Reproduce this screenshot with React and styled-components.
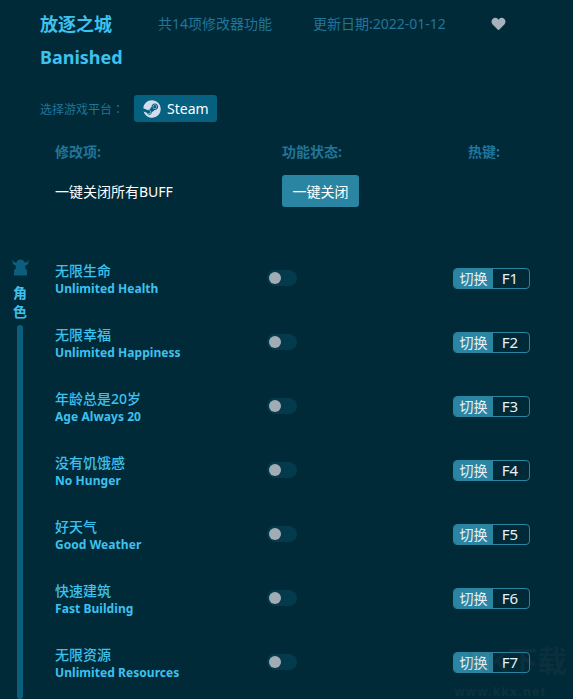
import React from 'react';
import styled, { createGlobalStyle } from 'styled-components';
import { FaSteam, FaHeart } from 'react-icons/fa';

const GlobalStyle = createGlobalStyle`
  html, body {
    margin: 0;
    height: 699px;
    overflow: hidden;
    background: #012a38;
  }
  * { box-sizing: border-box; }
`;

const Page = styled.div`
  position: relative;
  width: 573px;
  height: 699px;
  overflow: hidden;
  background: #012a38;
  font-family: "Noto Sans", "Noto Sans CJK SC", sans-serif;
  color: #fff;
`;

const Head = styled.header`
  padding: 10px 0 0 40px;
`;

const TopRow = styled.div`
  display: flex;
  align-items: center;
  height: 28px;
`;

const Title = styled.h1`
  margin: 0;
  width: 118px;
  font-size: 18px;
  line-height: 28px;
  font-weight: 700;
  color: #3dc1ee;
`;

const Meta = styled.span`
  width: ${props => props.w}px;
  font-size: 14px;
  line-height: 28px;
  color: #20759a;
  white-space: nowrap;
`;

const Heart = styled(FaHeart)`
  width: 15px;
  height: 14px;
  color: #a7b2bc;
`;

const SubTitle = styled.h2`
  margin: 5px 0 0;
  font-size: 18px;
  line-height: 28px;
  font-weight: 700;
  color: #3dc1ee;
`;

const PlatformRow = styled.div`
  display: flex;
  align-items: center;
  margin-top: 24px;
  height: 27px;
`;

const PlatformLabel = styled.span`
  width: 94px;
  font-size: 12px;
  color: #20759a;
  white-space: nowrap;
`;

const Colon = styled.span`
  font-family: "Noto Sans CJK TC", sans-serif;
`;

const SteamButton = styled.button`
  display: flex;
  align-items: center;
  gap: 6px;
  width: 83px;
  height: 27px;
  padding: 0 0 0 9px;
  border: 0;
  border-radius: 3px;
  background: #05617f;
  color: #fff;
  font: inherit;
  font-size: 14px;
`;

const SteamIcon = styled(FaSteam)`
  width: 18px;
  height: 18px;
  color: #d3dcea;
`;

const Columns = styled.div`
  display: grid;
  grid-template-columns: 227px 186px 1fr;
  padding-left: 55px;
  align-items: center;
`;

const ColumnHead = styled(Columns)`
  margin-top: 18px;
  height: 22px;
`;

const HeadCell = styled.span`
  font-size: 14px;
  font-weight: 700;
  color: #20759a;
`;

const CloseAll = styled(Columns)`
  margin-top: 13px;
  height: 32px;
`;

const CloseLabel = styled.span`
  font-size: 14px;
  color: #fff;
`;

const CloseButton = styled.button`
  width: 77px;
  height: 32px;
  padding: 0;
  border: 0;
  border-radius: 3px;
  background: #2a85a3;
  color: #fff;
  font: inherit;
  font-size: 14px;
`;

const Body = styled.div`
  display: grid;
  grid-template-columns: 55px 1fr;
  margin-top: 39px;
`;

const Side = styled.aside`
  display: flex;
  flex-direction: column;
  align-items: center;
  width: 40px;
  height: 453px;
  padding-top: 13px;
`;

const SideLabel = styled.span`
  margin-top: ${props => props.top}px;
  font-size: 14px;
  line-height: 19px;
  font-weight: 700;
  color: #3dc1ee;
`;

const SideBar = styled.div`
  width: 6px;
  flex: 1;
  margin-top: 4px;
  border-radius: 3px;
  background: #0b5f7c;
`;

const Rows = styled.div`
  display: flex;
  flex-direction: column;
`;

const Row = styled.div`
  display: grid;
  grid-template-columns: 212px 186px 77px;
  align-items: center;
  height: 64px;
`;

const Name = styled.div`
  display: flex;
  flex-direction: column;
  margin-top: 4px;
  color: #3dc1ee;
  font-weight: 700;
  font-size: 12px;
  line-height: 18px;
  letter-spacing: 0.06px;
`;

const NameCn = styled.span`
  font-size: 14px;
  font-weight: 500;
  letter-spacing: 0;
`;

const Toggle = styled.div`
  position: relative;
  width: 30px;
  height: 16px;
  border-radius: 8px;
  background: #033a4c;
  &::before {
    content: '';
    position: absolute;
    left: 2px;
    top: 2px;
    width: 12px;
    height: 12px;
    border-radius: 50%;
    background: #a2acb4;
  }
`;

const Hotkey = styled.div`
  display: flex;
  width: 77px;
  height: 21px;
  border: 1px solid #2a85a3;
  border-radius: 4px;
  overflow: hidden;
  font-size: 14px;
  line-height: 19px;
`;

const HotkeyAction = styled.span`
  width: 39px;
  background: #2a85a3;
  text-align: center;
  color: #e9f1f4;
`;

const HotkeyKey = styled.span`
  flex: 1;
  padding-right: 2px;
  text-align: center;
  font-size: 15px;
  color: #e9f1f4;
`;

const Watermark = styled.div`
  position: absolute;
  right: 7px;
  bottom: -1px;
  display: flex;
  flex-direction: column;
  align-items: flex-end;
  color: rgba(70, 80, 85, 0.22);
  font-family: "Liberation Sans", "Noto Sans CJK SC", sans-serif;
  font-weight: 700;
`;

const WatermarkLogo = styled.span`
  margin-bottom: 4px;
  font-size: 30px;
  line-height: 36px;
  letter-spacing: -1px;
  white-space: nowrap;
  opacity: 0.7;
`;

const WatermarkUrl = styled.span`
  margin-right: 20px;
  font-size: 13px;
  line-height: 16px;
  letter-spacing: 1.2px;
`;

const cheats = [
  ['无限生命', 'Unlimited Health', 'F1'],
  ['无限幸福', 'Unlimited Happiness', 'F2'],
  ['年龄总是20岁', 'Age Always 20', 'F3'],
  ['没有饥饿感', 'No Hunger', 'F4'],
  ['好天气', 'Good Weather', 'F5'],
  ['快速建筑', 'Fast Building', 'F6'],
  ['无限资源', 'Unlimited Resources', 'F7'],
];

function Helmet() {
  return (
    <svg width="17" height="17" viewBox="0 0 17 17" fill="#0b5f7c">
      <path d="M0 0.5 L2 3 L4.5 3.5 C5 1.5 6.5 0.5 8.5 0.5 C10.5 0.5 12 1.5 12.5 3.5 L15 3 L17 0.5 L16 5 L13 7 L13.5 10 L15 11 L15 16.5 L2 16.5 L2 11 L3.5 10 L4 7 L1 5 Z" />
    </svg>
  );
}

export default function App() {
  return (
    <Page>
      <GlobalStyle />
      <Head>
        <TopRow>
          <Title>放逐之城</Title>
          <Meta w={155}>共14项修改器功能</Meta>
          <Meta w={178}>更新日期:2022-01-12</Meta>
          <Heart />
        </TopRow>
        <SubTitle>Banished</SubTitle>
        <PlatformRow>
          <PlatformLabel>选择游戏平台<Colon>：</Colon></PlatformLabel>
          <SteamButton><SteamIcon />Steam</SteamButton>
        </PlatformRow>
      </Head>
      <ColumnHead>
        <HeadCell>修改项:</HeadCell>
        <HeadCell>功能状态:</HeadCell>
        <HeadCell>热键:</HeadCell>
      </ColumnHead>
      <CloseAll>
        <CloseLabel>一键关闭所有BUFF</CloseLabel>
        <CloseButton>一键关闭</CloseButton>
      </CloseAll>
      <Body>
        <Side>
          <Helmet />
          <SideLabel top={7}>角</SideLabel>
          <SideLabel top={0}>色</SideLabel>
          <SideBar />
        </Side>
        <Rows>
          {cheats.map(([cn, en, key]) => (
            <Row key={key}>
              <Name>
                <NameCn>{cn}</NameCn>
                <span>{en}</span>
              </Name>
              <Toggle />
              <Hotkey>
                <HotkeyAction>切换</HotkeyAction>
                <HotkeyKey>{key}</HotkeyKey>
              </Hotkey>
            </Row>
          ))}
        </Rows>
      </Body>
      <Watermark>
        <WatermarkLogo>KK下载</WatermarkLogo>
        <WatermarkUrl>www.kkx.net</WatermarkUrl>
      </Watermark>
    </Page>
  );
}
